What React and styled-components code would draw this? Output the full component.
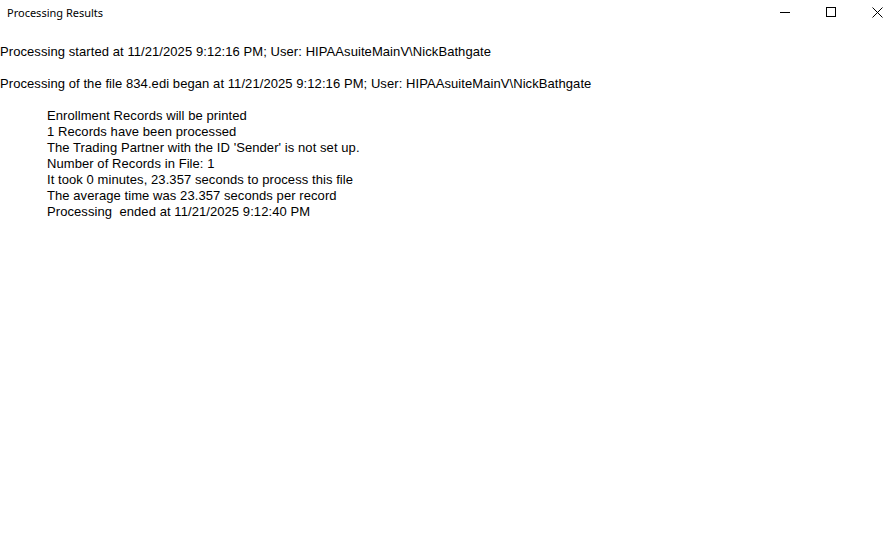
import React from "react";
import styled, { createGlobalStyle } from "styled-components";

const Global = createGlobalStyle`
  html, body { margin: 0; padding: 0; background: #fff; }
  body { width: 896px; height: 543px; overflow: hidden; }
`;

const Window = styled.div`
  width: 896px;
  height: 543px;
  display: flex;
  flex-direction: column;
  background: #fff;
  color: #000;
  overflow: hidden;
`;

const TitleBar = styled.div`
  height: 24px;
  display: flex;
  align-items: center;
  justify-content: space-between;
`;

const Title = styled.div`
  font-family: "Noto Sans", "DejaVu Sans", sans-serif;
  font-size: 11px;
  padding-left: 7px;
`;

const Controls = styled.div`
  display: flex;
  height: 24px;
  margin-right: -4px;
`;

const CtrlButton = styled.div`
  width: 46px;
  height: 24px;
  display: flex;
  align-items: center;
  justify-content: center;
`;

const Content = styled.div`
  font-family: "Liberation Sans", Arial, sans-serif;
  font-size: 13px;
  line-height: 16px;
  letter-spacing: 0.075px;
  padding-top: 20px;
  display: flex;
  flex-direction: column;
`;

const Line = styled.div`
  white-space: pre;
  margin-bottom: ${(p) => p.$gap || 0}px;
`;

const List = styled.div`
  padding-left: 47px;
  display: flex;
  flex-direction: column;
`;

const details = [
  "Enrollment Records will be printed",
  "1 Records have been processed",
  "The Trading Partner with the ID 'Sender' is not set up.",
  "Number of Records in File: 1",
  "It took 0 minutes, 23.357 seconds to process this file",
  "The average time was 23.357 seconds per record",
  "Processing  ended at 11/21/2025 9:12:40 PM",
];

export default function App() {
  return (
    <>
      <Global />
      <Window>
        <TitleBar>
          <Title>Processing Results</Title>
          <Controls>
            <CtrlButton>
              <svg width="10" height="10" viewBox="0 0 10 10">
                <line x1="0" y1="5.5" x2="10" y2="5.5" stroke="#000" strokeWidth="1" />
              </svg>
            </CtrlButton>
            <CtrlButton>
              <svg width="10" height="10" viewBox="0 0 10 10">
                <rect x="0.5" y="0.5" width="9" height="9" fill="none" stroke="#000" strokeWidth="1" />
              </svg>
            </CtrlButton>
            <CtrlButton>
              <svg width="11" height="11" viewBox="0 0 11 11">
                <path d="M0.5 0.5 L10.5 10.5 M10.5 0.5 L0.5 10.5" stroke="#000" strokeWidth="1" />
              </svg>
            </CtrlButton>
          </Controls>
        </TitleBar>
        <Content>
          <Line $gap={16}>Processing started at 11/21/2025 9:12:16 PM; User: HIPAAsuiteMainV\NickBathgate</Line>
          <Line $gap={16}>Processing of the file 834.edi began at 11/21/2025 9:12:16 PM; User: HIPAAsuiteMainV\NickBathgate</Line>
          <List>
            {details.map((d) => (
              <Line key={d}>{d}</Line>
            ))}
          </List>
        </Content>
      </Window>
    </>
  );
}
